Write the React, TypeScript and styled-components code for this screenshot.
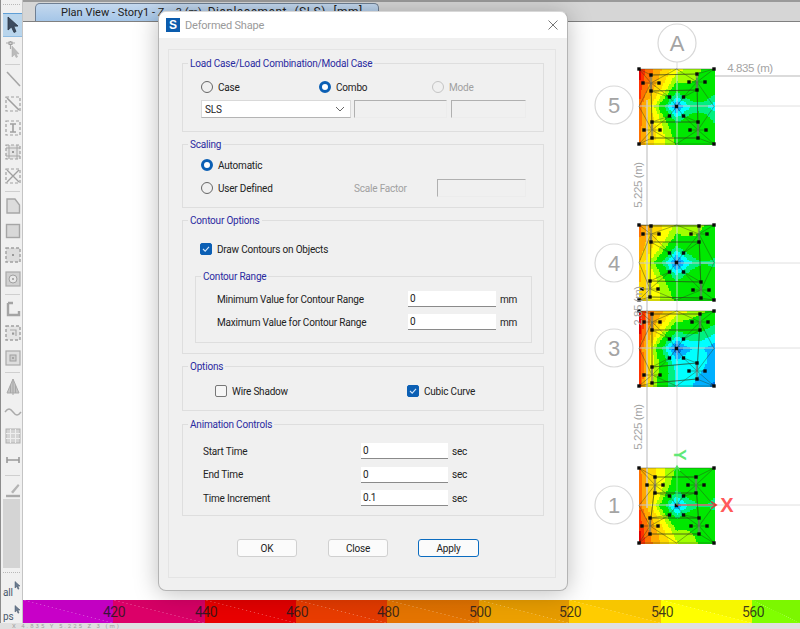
import React from 'react';
import styled, { createGlobalStyle } from 'styled-components';

const GlobalStyle = createGlobalStyle`
  html, body { margin: 0; padding: 0; background: #fff; }
  body { font-family: Roboto, "Liberation Sans", sans-serif; overflow: hidden; }
`;

const Page = styled.div`
  position: relative;
  width: 800px;
  height: 629px;
  display: flex;
  flex-direction: column;
  overflow: hidden;
  background: #e0e0e0;
`;

const TopBar = styled.div`
  height: 22px;
  flex: none;
  display: flex;
  align-items: flex-end;
  padding-left: 35px;
  box-sizing: border-box;
  background: #d6d6d6;
  border-top: 2px solid #9a9a9a;
  border-bottom: 1px solid #808080;
`;

const ViewTab = styled.div`
  width: 344px;
  height: 18px;
  box-sizing: border-box;
  display: flex;
  justify-content: space-between;
  padding: 0 34px 0 25px;
  border: 1px solid #6f7f93;
  border-bottom: none;
  border-radius: 5px 5px 0 0;
  background: linear-gradient(#c4d8ee, #a5c6e8);
  color: #222;
  font-size: 11px;
  line-height: 17px;
  white-space: nowrap;
`;

const TabTail = styled.span`
  font-size: 12px;
  letter-spacing: 0.5px;
  word-spacing: 4px;
`;

const Middle = styled.div`
  flex: 1;
  display: flex;
  min-height: 0;
`;

const Toolbar = styled.div`
  width: 23px;
  flex: none;
  margin-top: -22px;
  box-sizing: border-box;
  padding-left: 2px;
  display: flex;
  flex-direction: column;
  align-items: stretch;
  overflow: hidden;
  background: #f0f0f0;
  border-left: 1px solid #8c8c8c;
  border-right: 1px solid #c4c4c4;
  z-index: 1;
`;

const ToolButton = styled.div<{ $active?: boolean }>`
  height: 24.3px;
  flex: none;
  display: flex;
  align-items: center;
  justify-content: center;
  box-sizing: border-box;
  background: ${p => (p.$active ? '#b9d5ec' : 'transparent')};
  border-top: ${p => (p.$active ? '1px solid #5f9fd6' : 'none')};
  border-bottom: ${p => (p.$active ? '1px solid #8fbce2' : 'none')};
`;

const ToolSeparator = styled.div`
  height: 5.5px;
  flex: none;
  display: flex;
  align-items: center;
  &::after {
    content: '';
    flex: 1;
    height: 1px;
    margin: 0 2px;
    background: #cfcfcf;
  }
`;

const ToolFiller = styled.div`
  flex: 1;
  margin: -3px 2px 0 0;
  background: #d4d4d4;
`;

const ToolGrip = styled.div<{ $h: number }>`
  height: ${p => p.$h}px;
  flex: none;
  box-sizing: border-box;
  margin-right: 2px;
  padding-top: 4px;
  &::after {
    content: '';
    display: block;
    border-top: 1px dotted #b8b8b8;
  }
`;

const QuickButton = styled.div`
  height: 24px;
  flex: none;
  display: flex;
  align-items: flex-end;
  color: #48586c;
  font-size: 10px;
  line-height: 12px;
  letter-spacing: -0.2px;
`;

const QuickArrow = styled.span`
  align-self: flex-start;
  margin: 5px 0 0 1px;
  display: flex;
`;

const Canvas = styled.div`
  flex: 1;
  min-width: 0;
  display: flex;
  flex-direction: column;
  background: #fff;
`;

const DrawingArea = styled.svg`
  flex: 1;
  min-height: 0;
  display: block;
`;

const Legend = styled.div`
  height: 23px;
  flex: none;
  display: flex;
`;

const LegendBand = styled.div<{ $w: number; $c: string }>`
  position: relative;
  width: ${p => p.$w}px;
  flex: none;
  background-color: ${p => p.$c};
  background-image: linear-gradient(to top right, transparent 49.4%, rgba(255, 255, 255, 0.3) 50%, rgba(0, 0, 0, 0.03) 50.6%);
`;

const LegendLabel = styled.span`
  position: absolute;
  right: -12px;
  top: 4px;
  z-index: 2;
  font-size: 14px;
  line-height: 16px;
  letter-spacing: -0.5px;
  color: rgba(30, 25, 30, 0.85);
`;

const StatusBar = styled.div`
  height: 6px;
  flex: none;
  padding-left: 12px;
  background: #e0e0e0;
  overflow: hidden;
  font-size: 6px;
  line-height: 6px;
  letter-spacing: 2px;
  color: #a0a0a0;
`;

const Dialog = styled.div`
  position: absolute;
  left: 158px;
  top: 11px;
  width: 410px;
  height: 580px;
  box-sizing: border-box;
  display: flex;
  flex-direction: column;
  background: #f0f0f0;
  border: 1px solid #b4b4b4;
  border-top-color: #d8d8d8;
  border-radius: 8px;
  box-shadow: 0 2px 24px rgba(0, 0, 0, 0.26);
  overflow: hidden;
  z-index: 3;
  color: #222;
  font-size: 10px;
  letter-spacing: -0.2px;
`;

const TitleBar = styled.div`
  height: 26px;
  flex: none;
  display: flex;
  align-items: center;
  padding: 0 9px 0 7px;
  background: #fff;
`;

const AppBadge = styled.div`
  width: 14px;
  height: 14px;
  flex: none;
  display: flex;
  align-items: center;
  justify-content: center;
  margin-right: 5px;
  background: #0b5cad;
  color: #fff;
  font: bold 12px "Liberation Sans", sans-serif;
`;

const TitleText = styled.div`
  flex: 1;
  font-size: 11px;
  color: #9a9a9a;
`;

const CloseButton = styled.div`
  width: 10px;
  height: 10px;
  display: flex;
`;

const InnerPanel = styled.div`
  width: 388px;
  height: 529px;
  flex: none;
  box-sizing: border-box;
  margin: 11px 0 0 9px;
  padding: 13px 11px 0 13px;
  display: flex;
  flex-direction: column;
  border: 1px solid #e4e4e4;
`;

const Group = styled.div<{ $h: number; $gap?: number }>`
  height: ${p => p.$h}px;
  flex: none;
  box-sizing: border-box;
  margin-bottom: ${p => p.$gap ?? 12}px;
  border: 1px solid #dedede;
  display: flex;
  flex-direction: column;
`;

const GroupTitle = styled.div`
  align-self: flex-start;
  height: 14px;
  margin: -7px 0 0 5px;
  padding: 0 2px;
  background: #f0f0f0;
  color: #2a2aa0;
  line-height: 14px;
  white-space: nowrap;
`;

const Row = styled.div<{ $top?: number; $left?: number; $h?: number }>`
  display: flex;
  align-items: center;
  flex: none;
  height: ${p => p.$h ?? 16}px;
  margin-top: ${p => p.$top ?? 0}px;
  margin-left: ${p => p.$left ?? 0}px;
`;

const Choice = styled.label<{ $w?: number; $off?: boolean }>`
  display: flex;
  align-items: center;
  flex: none;
  gap: 5px;
  width: ${p => (p.$w ? `${p.$w}px` : 'auto')};
  color: ${p => (p.$off ? '#a0a0a0' : '#222')};
  white-space: nowrap;
`;

const Radio = styled.span<{ $on?: boolean; $off?: boolean }>`
  width: 12px;
  height: 12px;
  flex: none;
  box-sizing: border-box;
  border-radius: 50%;
  background: ${p => (p.$on ? '#fff' : 'transparent')};
  border: ${p => (p.$on ? '3.5px solid #0b5fb4' : `1px solid ${p.$off ? '#c4c4c4' : '#666'}`)};
`;

const Check = styled.span<{ $on?: boolean }>`
  width: 12px;
  height: 12px;
  flex: none;
  box-sizing: border-box;
  display: flex;
  align-items: center;
  justify-content: center;
  border-radius: 2px;
  background: ${p => (p.$on ? '#0b5fb4' : '#f6f6f6')};
  border: 1px solid ${p => (p.$on ? '#0b5fb4' : '#777')};
`;

const SelectBox = styled.div`
  width: 150px;
  height: 18px;
  flex: none;
  box-sizing: border-box;
  display: flex;
  align-items: center;
  justify-content: space-between;
  padding: 0 5px 0 3px;
  background: #fff;
  border: 1px solid #d9d9d9;
  border-bottom-color: #b4b4b4;
`;

const Field = styled.div<{ $w: number }>`
  width: ${p => p.$w}px;
  height: 16px;
  flex: none;
  box-sizing: border-box;
  padding: 0 2px;
  background: #fff;
  border-bottom: 1px solid #8a8a8a;
  line-height: 15px;
`;

const DisabledField = styled.div<{ $w: number; $ml?: number }>`
  width: ${p => p.$w}px;
  height: 18px;
  flex: none;
  box-sizing: border-box;
  margin-left: ${p => p.$ml ?? 0}px;
  border: 1px solid #ececec;
  border-top-color: #b0b0b0;
  border-left-color: #b0b0b0;
`;

const FieldLabel = styled.span<{ $w?: number; $off?: boolean }>`
  flex: none;
  width: ${p => (p.$w ? `${p.$w}px` : 'auto')};
  color: ${p => (p.$off ? '#a0a0a0' : '#222')};
  white-space: nowrap;
`;

const Unit = styled.span`
  margin-left: 4px;
`;

const InnerGroup = styled.div`
  width: 337px;
  height: 67px;
  flex: none;
  box-sizing: border-box;
  margin: 19px 0 0 12px;
  border: 1px solid #dedede;
  display: flex;
  flex-direction: column;
`;

const Buttons = styled.div`
  display: flex;
  margin: 23px 0 0 55px;
`;

const Button = styled.div<{ $primary?: boolean; $ml?: number }>`
  width: ${p => (p.$primary ? 61 : 60)}px;
  height: 18px;
  flex: none;
  box-sizing: border-box;
  margin-left: ${p => p.$ml ?? 0}px;
  display: flex;
  align-items: center;
  justify-content: center;
  background: #fbfbfb;
  border: 1px solid ${p => (p.$primary ? '#0b6cc0' : '#d0d0d0')};
  border-radius: 3px;
`;

const Arrow = () => (
  <svg width="14" height="18" viewBox="0 0 14 18">
    <path d="M2 1 L2 14 L5.5 11 L8 16.5 L10 15.5 L7.8 10.3 L12 10 Z" fill="#3c4c60" stroke="#2c3644" strokeWidth="0.8" />
  </svg>
);

const SmallArrow = () => (
  <svg width="7" height="11" viewBox="0 0 14 18">
    <path d="M2 1 L2 14 L5.5 11 L8 16.5 L10 15.5 L7.8 10.3 L12 10 Z" fill="#6c7c90" stroke="#48586c" strokeWidth="1" />
  </svg>
);

const CheckMark = () => (
  <svg width="8" height="8" viewBox="0 0 8 8"><path d="M1 4L3.200 6.200L7 1.800" fill="none" stroke="#cfe4fa" strokeWidth="1.100" /></svg>
);

const toolIcons: Record<string, React.ReactNode> = {
  node: (<><path d="M2 3h9M6.5 1v8" stroke="#aaa" strokeWidth="1.2" /><rect x="5" y="2" width="3" height="2.4" fill="#ddd" stroke="#999" /><path d="M8 6v11l2.6-2.4 1.6 3 1.4-.8-1.5-3H15z" fill="#bbb" stroke="#aaa" strokeWidth=".5" /></>),
  line: <path d="M3 2 L16 16" stroke="#a6a6a6" strokeWidth="1.6" />,
  dashLine: (<><rect x="2" y="2" width="14" height="14" fill="none" stroke="#a0a0a0" strokeWidth="1.2" strokeDasharray="3 2" /><path d="M3 3 L15 15" stroke="#a0a0a0" strokeWidth="1.6" /></>),
  dashBeam: (<><rect x="2" y="2" width="14" height="14" fill="none" stroke="#a0a0a0" strokeWidth="1.2" strokeDasharray="3 2" /><path d="M6 5h6M9 5v8M6 13h6" stroke="#a0a0a0" strokeWidth="1.6" /></>),
  hatch: (<><rect x="2" y="2" width="14" height="14" fill="#e4e4e4" stroke="#a0a0a0" strokeWidth="1.2" strokeDasharray="3 2" /><path d="M2 5h14M2 13h14M5 2v14M13 2v14" stroke="#a8a8a8" /><rect x="8" y="8" width="2" height="2" fill="#999" /></>),
  cross: (<><rect x="2" y="2" width="14" height="14" fill="none" stroke="#a0a0a0" strokeWidth="1.2" strokeDasharray="3 2" /><path d="M3 3 L15 15M15 3 L3 15" stroke="#a0a0a0" strokeWidth="1.4" /></>),
  poly: <path d="M3 2H11L15.500 8V16H3Z" fill="#dcdcdc" stroke="#a6a6a6" strokeWidth="1.4" />,
  square: <rect x="2.500" y="2.500" width="13" height="13" fill="#d8d8d8" stroke="#a6a6a6" strokeWidth="1.4" />,
  dashSquare: (<><rect x="2" y="2" width="14" height="14" fill="#dcdcdc" stroke="#a0a0a0" strokeWidth="1.4" strokeDasharray="3 2" /><rect x="8" y="8" width="2" height="2" fill="#999" /></>),
  ring: (<><rect x="2" y="2" width="14" height="14" fill="#d0d0d0" stroke="#aaa" strokeWidth="1.2" /><circle cx="9" cy="9" r="4" fill="#e8e8e8" stroke="#a0a0a0" /><circle cx="9" cy="9" r="1" fill="#999" /></>),
  channel: <path d="M4 3 V15 H15 V11 M4 3 H9" fill="none" stroke="#a4a4a4" strokeWidth="2.4" />,
  dashNest: (<><rect x="2" y="2" width="14" height="14" fill="#e4e4e4" stroke="#a0a0a0" strokeWidth="1.4" strokeDasharray="3 2" /><path d="M6 6h6v6" fill="none" stroke="#aaa" strokeWidth="1.2" /><rect x="8" y="8.500" width="2.200" height="2.200" fill="#999" /></>),
  nested: (<><rect x="2" y="2" width="14" height="14" fill="#dedede" stroke="#aaa" strokeWidth="1.2" /><rect x="6" y="6" width="6" height="6" fill="#ccc" stroke="#a0a0a0" /><circle cx="9" cy="9" r="1" fill="#999" /></>),
  load: (<><path d="M9 1 L15 15 H3 Z" fill="#c4c4c4" stroke="#aaa" /><path d="M9 1V17M6.500 7V15M11.500 7V15" stroke="#a8a8a8" /></>),
  wave: <path d="M1 9 C4 5 6 5 9 9 S14 13 17 9" fill="none" stroke="#aaa" strokeWidth="1.4" />,
  grid: (<><rect x="2" y="2" width="14" height="14" fill="#d4d4d4" stroke="#b0b0b0" /><path d="M6.500 2v14M11.500 2v14M2 6.500h14M2 11.500h14" stroke="#eee" /></>),
  beam: <path d="M3 6V12M15 6V12M3 9H15" stroke="#999" strokeWidth="1.6" fill="none" />,
  pencil: (<><path d="M7 11 L14 3 L15.500 4.500 L9 12.500 Z" fill="#b4b4b4" /><path d="M2 15h14" stroke="#aaa" strokeWidth="2.400" /></>),
};

const Tool = ({ icon }: { icon: string }) => (
  <ToolButton>
    <svg width="18" height="18" viewBox="0 0 18 18">{toolIcons[icon]}</svg>
  </ToolButton>
);

const bands: [number, string][] = [
  [90, '#c800c8'], [92, '#dc0068'], [91, '#e80000'], [91, '#e83c00'], [92, '#e47400'],
  [90, '#eca000'], [92, '#ffcc00'], [91, '#ffff00'], [48, '#80ff00'],
];
const legendLabels = ['420', '440', '460', '480', '500', '520', '540', '560', ''];

const contourStops: [number, string][] = [
  [0.05, '#e00000'], [0.1, '#ff3000'], [0.16, '#ff7000'], [0.22, '#ffa800'], [0.28, '#ffd800'],
  [0.34, '#ffff00'], [0.4, '#a0ff00'], [0.54, '#00e800'], [0.64, '#00f080'], [0.78, '#00ffff'], [0.92, '#00b0ff'], [9, '#0070e0'],
];
const contourColor = (v: number) => contourStops.find(s => v < s[0])![1];

interface Slab {
  y: number;
  corners: [number, number, number, number];
  dip: number;
  edge: number;
  clusters: [number, number][];
}

const slabs: Slab[] = [
  { y: 69, corners: [0, 0.44, 0.14, 0.5], dip: 0.72, edge: 0.24, clusters: [[12, 14], [58, 13], [13, 61], [59, 61]] },
  { y: 225, corners: [0.12, 0.42, 0.22, 0.46], dip: 0.8, edge: 0.12, clusters: [[12, 9], [60, 9], [11, 64], [62, 65]] },
  { y: 311, corners: [0, 0.42, 0.02, 0.95], dip: 0.7, edge: 0.2, clusters: [[13, 11], [61, 11], [13, 64], [58, 60]] },
  { y: 468, corners: [0.12, 0.52, 0, 0.46], dip: 0.62, edge: 0.06, clusters: [[16, 17], [57, 17], [11, 58], [60, 58]] },
];

const SLAB_X = 639;
const SLAB_SIZE = 75;
const CELL = 1.5;

const SlabCells = ({ slab }: { slab: Slab }) => {
  const cells: React.ReactNode[] = [];
  const n = Math.round(SLAB_SIZE / CELL);
  const [tl, tr, bl, br] = slab.corners;
  for (let j = 0; j < n; j++) {
    for (let i = 0; i < n; i++) {
      const x = (i + 0.5) / n;
      const w = (j + 0.5) / n;
      const u = Math.pow(x, 0.62);
      const base = tl * (1 - u) * (1 - w) + tr * u * (1 - w) + bl * (1 - u) * w + br * u * w;
      const centre = Math.abs(x - 0.5) + Math.abs(w - 0.5);
      const side = Math.abs(x - 1) + Math.abs(w - 0.5);
      const v = base + slab.dip * Math.exp(-centre / 0.17) + slab.edge * Math.exp(-side / 0.14);
      cells.push(
        <rect key={`${i}-${j}`} x={SLAB_X + i * CELL} y={slab.y + j * CELL} width={CELL + 0.5} height={CELL + 0.5} fill={contourColor(v)} shapeRendering="crispEdges" />,
      );
    }
  }
  return <>{cells}</>;
};

const SlabMesh = ({ slab }: { slab: Slab }) => {
  const S = SLAB_SIZE;
  const c: [number, number] = [37.5, 37.5];
  const corners: [number, number][] = [[0, 0], [S, 0], [0, S], [S, S]];
  const mids: [number, number][] = [[S / 2, 0], [0, S / 2], [S, S / 2], [S / 2, S]];
  const core: [number, number][] = [[30.5, 28], [44.5, 28], [30.5, 47], [44.5, 47]];
  const lines: [number, number, number, number][] = [];
  const nodes: [number, number][] = [...corners, ...core, c];
  slab.clusters.forEach(([x, y], k) => {
    const ring: [number, number][] = [[x, y - 8], [x, y + 8], [x - 8, y], [x + 8, y]];
    nodes.push(...ring);
    lines.push([x - 8, y, x + 8, y]);
    lines.push([corners[k][0], corners[k][1], x, y], [corners[k][0], corners[k][1], ring[k < 2 ? 0 : 1][0], ring[k < 2 ? 0 : 1][1]]);
    lines.push([x, y, core[k][0], core[k][1]], [ring[k < 2 ? 1 : 0][0], ring[k < 2 ? 1 : 0][1], core[k][0], core[k][1]]);
    const mate = slab.clusters[k % 2 === 0 ? k + 1 : k - 1];
    lines.push([x, y - 8, mate[0], mate[1] - 8], [x, y + 8, mate[0], mate[1] + 8]);
    const across = mids[k < 2 ? 0 : 3];
    const beside = mids[k % 2 === 0 ? 1 : 2];
    lines.push([x, y, across[0], across[1]], [x, y, beside[0], beside[1]]);
    const below = slab.clusters[(k + 2) % 4];
    lines.push([x, y, below[0], below[1]]);
  });
  core.forEach(p => lines.push([p[0], p[1], c[0], c[1]]));
  for (let i = 0; i < 4; i++) {
    lines.push([corners[i][0], corners[i][1], mids[i < 2 ? 0 : 3][0], mids[i < 2 ? 0 : 3][1]]);
  }
  return (
    <>
      {lines.map((l, i) => (
        <line key={i} x1={SLAB_X + l[0]} y1={slab.y + l[1]} x2={SLAB_X + l[2]} y2={slab.y + l[3]} stroke="#2c3a1c" strokeOpacity="0.6" strokeWidth="0.7" />
      ))}
      {slab.clusters.map(([x, y], i) => (
        <rect key={`b${i}`} x={SLAB_X + x - 1.2} y={slab.y + y - 8} width="2.4" height="16" fill="#777" fillOpacity="0.65" />
      ))}
      {nodes.map((n, i) => (
        <rect key={`n${i}`} x={SLAB_X + n[0] - 1.7} y={slab.y + n[1] - 1.7} width="3.4" height="3.4" fill="#0a0a0a" />
      ))}
    </>
  );
};

const OX = 23;
const OY = 22;
const gridColor = '#d8d8d8';

const Bubble = ({ x, y, label }: { x: number; y: number; label: string }) => (
  <g>
    <circle cx={x} cy={y} r="19" fill="#fff" stroke={gridColor} strokeWidth="1.2" />
    <text x={x} y={y + 8} textAnchor="middle" fontSize="22" fill="#a4a4a4" fontFamily="Liberation Sans, sans-serif">{label}</text>
  </g>
);

const DimText = ({ x, y, rotate, children }: { x: number; y: number; rotate?: boolean; children: string }) => (
  <text
    x={x}
    y={y}
    textAnchor="middle"
    fontSize="11.5"
    letterSpacing="-0.4"
    fill="#a4a4a4"
    fontFamily="Liberation Sans, sans-serif"
    transform={rotate ? `rotate(-90 ${x} ${y})` : undefined}
  >
    {children}
  </text>
);

const PlanDrawing = () => (
  <DrawingArea viewBox={`${OX} ${OY} 777 578`} preserveAspectRatio="none">
    {[76, 106, 263, 348, 505].map(y => (
      <line key={y} x1={y === 76 ? 714 : 639} y1={y} x2="800" y2={y} stroke={y === 76 ? '#cfcfcf' : '#e0e0e0'} strokeWidth={y === 76 ? 1.4 : 1} />
    ))}
    {slabs.map(s => <SlabCells key={s.y} slab={s} />)}
    <line x1="647" y1="100" x2="647" y2="508" stroke="#cdcdcd" strokeWidth="1.4" />
    <line x1="677" y1="62" x2="677" y2="468" stroke="#d8d8d8" strokeOpacity="0.8" strokeWidth="1.2" />
    {[106, 263, 348, 505].map(y => (
      <line key={y} x1="639" y1={y} x2="714" y2={y} stroke="#c8c8c8" strokeWidth="1" />
    ))}
    {slabs.map(s => <SlabMesh key={s.y} slab={s} />)}
    <Bubble x={677} y={43} label="A" />
    <Bubble x={614} y={105} label="5" />
    <Bubble x={614} y={263} label="4" />
    <Bubble x={614} y={348} label="3" />
    <Bubble x={614} y={505} label="1" />
    <DimText x={750} y={72}>4.835 (m)</DimText>
    <DimText x={642} y={185} rotate>5.225 (m)</DimText>
    <DimText x={642} y={306} rotate>2.85 (m)</DimText>
    <DimText x={642} y={427} rotate>5.225 (m)</DimText>
    <path d="M677 505H716M711 501.500L716.500 505L711 508.500" fill="none" stroke="#e83030" strokeWidth="1.200" />
    <path d="M677 505V467M674 471L677 466L680 471" fill="none" stroke="#50e060" strokeWidth="1.200" />
    <text x="727" y="512" textAnchor="middle" fontSize="20" fontWeight="bold" fill="#ff5a5a" fontFamily="Liberation Sans, sans-serif">X</text>
    <text x="0" y="0" textAnchor="middle" fontSize="17" fontWeight="bold" fill="#60e878" fontFamily="Liberation Sans, sans-serif" transform="translate(674 455) rotate(90)">Y</text>
  </DrawingArea>
);

const App = () => (
  <Page>
    <GlobalStyle />
    <TopBar>
      <ViewTab>
        <span>Plan View - Story1 - Z = 3 (m) -</span>
        <TabTail>Displacement (SLS) [mm]</TabTail>
      </ViewTab>
    </TopBar>
    <Middle>
      <Toolbar>
        <ToolGrip $h={13} />
        <ToolButton $active><Arrow /></ToolButton>
        <Tool icon="node" />
        <ToolSeparator />
        <Tool icon="line" />
        <Tool icon="dashLine" />
        <Tool icon="dashBeam" />
        <Tool icon="hatch" />
        <Tool icon="cross" />
        <ToolSeparator />
        <Tool icon="poly" />
        <Tool icon="square" />
        <Tool icon="dashSquare" />
        <Tool icon="ring" />
        <ToolSeparator />
        <Tool icon="channel" />
        <Tool icon="dashNest" />
        <Tool icon="nested" />
        <ToolSeparator />
        <Tool icon="load" />
        <Tool icon="wave" />
        <Tool icon="grid" />
        <Tool icon="beam" />
        <ToolSeparator />
        <Tool icon="pencil" />
        <ToolFiller />
        <ToolGrip $h={7} />
        <QuickButton>all<QuickArrow><SmallArrow /></QuickArrow></QuickButton>
        <QuickButton>ps<QuickArrow><SmallArrow /></QuickArrow></QuickButton>
      </Toolbar>
      <Canvas>
        <PlanDrawing />
        <Legend>
          {bands.map(([w, c], i) => (
            <LegendBand key={c} $w={w} $c={c}>
              {legendLabels[i] && <LegendLabel>{legendLabels[i]}</LegendLabel>}
            </LegendBand>
          ))}
        </Legend>
      </Canvas>
    </Middle>
    <StatusBar>X 4.835 Y 5.225 Z 3 (m)</StatusBar>
    <Dialog>
      <TitleBar>
        <AppBadge>S</AppBadge>
        <TitleText>Deformed Shape</TitleText>
        <CloseButton>
          <svg width="10" height="10" viewBox="0 0 10 10"><path d="M0.500 0.500L9.500 9.500M9.500 0.500L0.500 9.500" stroke="#666" strokeWidth="0.9" /></svg>
        </CloseButton>
      </TitleBar>
      <InnerPanel>
        <Group $h={69}>
          <GroupTitle>Load Case/Load Combination/Modal Case</GroupTitle>
          <Row $top={8} $left={18}>
            <Choice $w={118}><Radio />Case</Choice>
            <Choice $w={113}><Radio $on />Combo</Choice>
            <Choice $off><Radio $off />Mode</Choice>
          </Row>
          <Row $top={5} $left={18} $h={18}>
            <SelectBox>
              SLS
              <svg width="10" height="6" viewBox="0 0 10 6"><path d="M1 1L5 5L9 1" fill="none" stroke="#666" /></svg>
            </SelectBox>
            <DisabledField $w={93} $ml={3} />
            <DisabledField $w={75} $ml={4} />
          </Row>
        </Group>
        <Group $h={64}>
          <GroupTitle>Scaling</GroupTitle>
          <Row $top={5} $left={18}><Choice><Radio $on />Automatic</Choice></Row>
          <Row $top={6} $left={18} $h={18}>
            <Choice $w={153}><Radio />User Defined</Choice>
            <FieldLabel $w={83} $off>Scale Factor</FieldLabel>
            <DisabledField $w={89} />
          </Row>
        </Group>
        <Group $h={134}>
          <GroupTitle>Contour Options</GroupTitle>
          <Row $top={13} $left={17}>
            <Choice><Check $on><CheckMark /></Check>Draw Contours on Objects</Choice>
          </Row>
          <InnerGroup>
            <GroupTitle>Contour Range</GroupTitle>
            <Row $top={7} $left={21}>
              <FieldLabel $w={191}>Minimum Value for Contour Range</FieldLabel>
              <Field $w={88}>0</Field>
              <Unit>mm</Unit>
            </Row>
            <Row $top={7} $left={21}>
              <FieldLabel $w={191}>Maximum Value for Contour Range</FieldLabel>
              <Field $w={88}>0</Field>
              <Unit>mm</Unit>
            </Row>
          </InnerGroup>
        </Group>
        <Group $h={45} $gap={13}>
          <GroupTitle>Options</GroupTitle>
          <Row $top={9} $left={32}>
            <Choice $w={192}><Check />Wire Shadow</Choice>
            <Choice><Check $on><CheckMark /></Check>Cubic Curve</Choice>
          </Row>
        </Group>
        <Group $h={92} $gap={0}>
          <GroupTitle>Animation Controls</GroupTitle>
          <Row $top={11} $left={20}><FieldLabel $w={158}>Start Time</FieldLabel><Field $w={87}>0</Field><Unit>sec</Unit></Row>
          <Row $top={7.500} $left={20}><FieldLabel $w={158}>End Time</FieldLabel><Field $w={87}>0</Field><Unit>sec</Unit></Row>
          <Row $top={7.500} $left={20}><FieldLabel $w={158}>Time Increment</FieldLabel><Field $w={87}>0.1</Field><Unit>sec</Unit></Row>
        </Group>
        <Buttons>
          <Button>OK</Button>
          <Button $ml={31}>Close</Button>
          <Button $primary $ml={30}>Apply</Button>
        </Buttons>
      </InnerPanel>
    </Dialog>
  </Page>
);

export default App;
